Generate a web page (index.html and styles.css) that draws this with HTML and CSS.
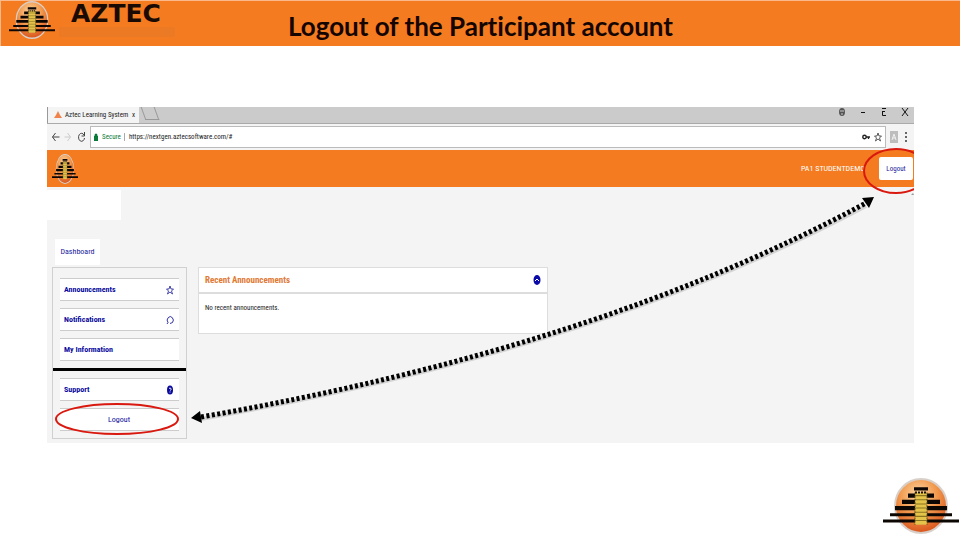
FILE: index.html
```html
<!DOCTYPE html>
<html lang="en">
<head>
    <meta charset="UTF-8">
    <meta name="viewport" content="width=device-width, initial-scale=1.0">
    <title>Logout of the Participant account</title>
    <link rel="stylesheet" href="styles.css">
</head>
<body>
    <!-- Pyramid logo, shared by the three places that use it -->
    <svg class="defs" aria-hidden="true">
        <defs>
            <radialGradient id="sun" cx="45%" cy="30%" r="70%">
                <stop offset="0" stop-color="#fbd9a8"/>
                <stop offset="0.5" stop-color="#f29a4e"/>
                <stop offset="1" stop-color="#d9541c"/>
            </radialGradient>
            <symbol id="pyramid" viewBox="0 0 76 54" preserveAspectRatio="none">
                <ellipse cx="38" cy="27" rx="26" ry="26" fill="url(#sun)" stroke="#d8cfc8" stroke-width="2"/>
                <path d="M31 9h14v3H31zM25 15h26v4H25zM19 21h38v4H19zM12 27h52v4H12zM7 34h62v3H7zM0 40h76v3H0z" fill="#0c0703"/>
                <path d="M32 14h12v31H32z" fill="#e3c34a"/>
                <path d="M32 17h12M32 21h12M32 25h12M32 29h12M32 33h12M32 37h12M32 41h12" stroke="#8a7420" stroke-width="1"/>
                <path d="M32 14v31M44 14v31" stroke="#5c4b12" stroke-width="1" stroke-dasharray="2 1"/>
                <path d="M32 14h12" stroke="#1a1204" stroke-width="2" stroke-dasharray="2 1"/>
            </symbol>
        </defs>
    </svg>

    <header class="slide-header">
        <div class="brand">
            <svg class="brand-logo"><use href="#pyramid"/></svg>
            <div class="brand-text">
                <span class="brand-name">AZTEC</span>
                <div class="brand-strip"></div>
            </div>
        </div>
        <h1>Logout of the Participant account</h1>
    </header>

    <main class="window">
        <div class="tab-strip">
            <div class="tab">
                <svg class="tab-icon" viewBox="0 0 8 8"><path d="M4 0l1 2 1 2 2 3H0l2-3 1-2z" fill="#f0824a"/></svg>
                <span>Aztec Learning System</span>
                <span class="tab-close">x</span>
            </div>
            <div class="new-tab"></div>
            <div class="window-buttons">
                <svg viewBox="0 0 10 10"><ellipse cx="5" cy="5" rx="3" ry="4" fill="#555"/><path d="M3 4h4M4 7h2" stroke="#ccc"/></svg>
                <svg viewBox="0 0 10 10"><path d="M3 5.500h4" stroke="#111"/></svg>
                <svg viewBox="0 0 10 10"><path d="M3 1.500h4M3.500 4v4.500H7M3 4.500h3" fill="none" stroke="#111"/></svg>
                <svg viewBox="0 0 10 10"><path d="M2 1l6 8M8 1L2 9" stroke="#111"/></svg>
            </div>
        </div>

        <div class="toolbar">
            <svg class="nav-icon" viewBox="0 0 8 10"><path d="M8 5H1M4 1L1 5l3 4" fill="none" stroke="#444"/></svg>
            <svg class="nav-icon" viewBox="0 0 8 10"><path d="M0 5h6M3 1l3 4-3 4" fill="none" stroke="#ccc"/></svg>
            <svg class="nav-icon" viewBox="0 0 8 10"><path d="M6.500 3A3 4 0 1 0 7 6M7 0v4H4" fill="none" stroke="#444"/></svg>
            <div class="address">
                <svg class="lock" viewBox="0 0 4 8"><path d="M0 3h4v5H0zM1 3V1h2v2" fill="#0b7a3b" stroke="#0b7a3b" stroke-width="0.500"/></svg>
                <span class="secure">Secure</span>
                <span class="url">https://nextgen.aztecsoftware.com/#</span>
                <svg class="key" viewBox="0 0 8 8"><circle cx="2.500" cy="4" r="1.700" fill="none" stroke="#222" stroke-width="1.400"/><path d="M4 4h4M6.500 4v2" stroke="#222" stroke-width="1.300"/></svg>
                <svg class="star" viewBox="0 0 8 10"><path d="M4 1l1 3h2.500L5.500 6l1 3L4 7 1.500 9l1-3L.5 4H3z" fill="none" stroke="#333" stroke-width="0.800"/></svg>
            </div>
            <svg class="extension" viewBox="0 0 8 12"><path d="M0 0h8v12H0z" fill="#bdbdbd"/><path d="M2 9l2-6 2 6M2 7h4" fill="none" stroke="#eee"/></svg>
            <svg class="dots" viewBox="0 0 4 12"><path d="M1 1h2v2H1zM1 5h2v2H1zM1 9h2v2H1z" fill="#666"/></svg>
        </div>

        <div class="app-bar">
            <svg class="app-logo"><use href="#pyramid"/></svg>
            <span class="user">PA1 STUDENTDEMO</span>
            <button class="logout-top">Logout</button>
        </div>

        <div class="app">
            <div class="blank"></div>
            <a class="crumb" href="#">Dashboard</a>
            <div class="columns">
                <nav class="sidebar">
                    <a class="item" href="#">Announcements
                        <svg viewBox="0 0 8 10"><path d="M4 1l1 3h2.500L5.500 6l1 3L4 7 1.500 9l1-3L.5 4H3z" fill="none" stroke="#1a1a9c" stroke-width="0.800"/></svg>
                    </a>
                    <a class="item" href="#">Notifications
                        <svg viewBox="0 0 8 10"><path d="M1 9l1-1.500A3 3.500 0 1 1 6.500 7.500L4 8.500" fill="none" stroke="#1a1a9c" stroke-width="0.900"/></svg>
                    </a>
                    <a class="item" href="#">My Information</a>
                    <hr>
                    <a class="item" href="#">Support
                        <svg viewBox="0 0 8 10"><ellipse cx="4" cy="5" rx="3" ry="4.500" fill="#0a0a9c"/><path d="M3 3.500q1-1 2 0T4 5.500M4 6.500v1" fill="none" stroke="#fff" stroke-width="0.900"/></svg>
                    </a>
                    <button class="item logout-side">Logout</button>
                </nav>
                <section class="panel">
                    <div class="panel-head">
                        <h2>Recent Announcements</h2>
                        <svg viewBox="0 0 8 10"><ellipse cx="4" cy="5" rx="3.500" ry="5" fill="#0a0aa8"/><path d="M2 6l2-2 2 2" fill="none" stroke="#fff"/></svg>
                    </div>
                    <p>No recent announcements.</p>
                </section>
            </div>
        </div>

        <!-- Red rings and the dotted arrow that joins both logout buttons -->
        <svg class="marks" viewBox="0 0 867 336" preserveAspectRatio="none" aria-hidden="true">
            <g fill="none" stroke="#d9190f" stroke-width="2">
                <ellipse cx="849" cy="64" rx="32" ry="22"/>
                <ellipse cx="70" cy="312" rx="61" ry="15"/>
            </g>
            <path d="M154 312Q550 243 819 99" fill="none" stroke="#d4d4d4" stroke-width="4"/>
            <path d="M154 310Q550 241 819 96" fill="none" stroke="#000" stroke-width="5" stroke-dasharray="3 2.400"/>
            <path d="M144 311l9-7 2 12zM827 90l-5 11-7-10z"/>
            <path d="M864 88l2-2 1 2z" fill="#999"/>
        </svg>
    </main>

    <footer>
        <svg class="footer-logo"><use href="#pyramid"/></svg>
    </footer>
</body>
</html>
```
FILE: styles.css
```css
* {
    box-sizing: border-box;
}

body {
    margin: 0;
    min-height: 100vh;
    display: flex;
    flex-direction: column;
    background-color: #fff;
    font-family: "Liberation Sans Narrow", "Arial Narrow", "Roboto Condensed", Roboto, sans-serif;
    font-size: 8px;
    color: #222;
}

svg {
    display: block;
    flex: none;
}

.defs {
    position: absolute;
    width: 0;
    height: 0;
}

a {
    color: #1a1a9c;
    text-decoration: none;
}

button {
    font-family: inherit;
    cursor: pointer;
}

/* Slide header */
.slide-header {
    display: grid;
    grid-template-columns: 1fr auto 1fr;
    align-items: center;
    height: 46px;
    background-color: #f47b20;
    border-top: 1px solid #f9b98a;
    border-left: 1px solid #f9b98a;
}

.brand {
    display: flex;
    align-self: start;
    gap: 4px;
    padding-left: 8px;
}

.brand-logo {
    width: 46px;
    height: 38px;
}

.brand-name {
    display: block;
    padding-left: 12px;
    font-family: "DejaVu Sans", sans-serif;
    font-size: 25px;
    font-weight: bold;
    line-height: 26px;
    color: #1a0a04;
}

.brand-strip {
    width: 116px;
    height: 10px;
    background-color: #ec7a24;
}

h1 {
    margin: 0;
    padding-top: 4px;
    font-family: Lato, sans-serif;
    font-size: 26px;
    line-height: 32px;
    font-variant-ligatures: none;
    color: #150500;
}

/* Browser window */
.window {
    position: relative;
    margin: 61px 46px 0 47px;
    background-color: #f4f4f4;
    overflow: hidden;
}

.tab-strip {
    display: flex;
    height: 16px;
    background-color: #cbcbcb;
}

.tab {
    display: flex;
    align-items: center;
    gap: 3px;
    width: 92px;
    padding: 0 4px 0 6px;
    background-color: #f4f4f4;
    border-left: 1px solid #999;
    font-size: 7px;
    line-height: 12px;
    white-space: nowrap;
}

.tab-icon {
    width: 8px;
    height: 8px;
}

.tab-close {
    margin-left: auto;
}

.new-tab {
    width: 14px;
    height: 13px;
    margin-left: 4px;
    border: 1px solid #999;
    border-top: none;
    transform: skewX(20deg);
}

.window-buttons {
    display: flex;
    gap: 11px;
    margin-left: auto;
    padding-right: 4px;
}

.window-buttons svg {
    width: 10px;
    height: 10px;
}

.toolbar {
    display: flex;
    align-items: center;
    gap: 4px;
    height: 27px;
    padding: 0 4px;
    border-top: 1px solid #aaa;
}

.nav-icon {
    width: 9px;
    height: 10px;
}

.address {
    flex: 1;
    display: flex;
    align-items: center;
    gap: 4px;
    height: 22px;
    padding: 0 3px;
    background-color: #fff;
    border: 1px solid #bbb;
    font-size: 7px;
}

.lock {
    width: 4px;
    height: 8px;
}

.secure {
    padding-right: 3px;
    border-right: 1px solid #aaa;
    color: #0b7a3b;
}

.key {
    width: 8px;
    height: 8px;
    margin-left: auto;
}

.star {
    width: 8px;
    height: 10px;
}

.extension {
    width: 8px;
    height: 12px;
}

.dots {
    width: 8px;
    height: 12px;
}

/* Application */
.app-bar {
    display: flex;
    align-items: center;
    height: 37px;
    padding: 0 1px 0 5px;
    background-color: #f47b20;
}

.app-logo {
    width: 26px;
    height: 30px;
}

.user {
    margin-left: auto;
    padding-right: 14px;
    color: #fff;
}

.logout-top {
    width: 34px;
    height: 23px;
    padding: 0;
    border: none;
    border-radius: 2px;
    background-color: #fff;
    font-size: 7px;
    color: #1a1a9c;
}

.app {
    padding: 3px 5px 4px;
}

.blank {
    width: 74px;
    height: 30px;
    margin-left: -5px;
    background-color: #fff;
}

.crumb {
    display: block;
    width: 45px;
    margin: 19px 0 2px 3px;
    background-color: #fff;
    line-height: 26px;
    text-align: center;
}

.columns {
    display: flex;
    align-items: flex-start;
    gap: 11px;
}

.sidebar {
    display: flex;
    flex-direction: column;
    gap: 7px;
    width: 135px;
    padding: 10px 7px 7px;
    border: 1px solid #d0d0d0;
}

.item {
    display: flex;
    align-items: center;
    justify-content: space-between;
    height: 23px;
    padding: 0 5px 0 4px;
    background-color: #fff;
    border: 0 solid #ccc;
    border-width: 1px 0;
    font-size: 8px;
    font-weight: bold;
    color: #0a0a9c;
}

.item svg {
    width: 8px;
    height: 10px;
}

.sidebar hr {
    width: 133px;
    height: 3px;
    margin: 0 -7px;
    border: none;
    background-color: #000;
}

.logout-side {
    justify-content: center;
    font-weight: normal;
}

.panel {
    width: 350px;
    min-height: 67px;
    background-color: #fff;
    border: 1px solid #ddd;
}

.panel-head {
    display: flex;
    align-items: center;
    justify-content: space-between;
    height: 26px;
    padding: 0 6px;
    border-bottom: 2px solid #ddd;
}

.panel-head svg {
    width: 8px;
    height: 10px;
}

h2 {
    margin: 0;
    font-size: 9px;
    color: #e07a35;
}

.panel p {
    margin: 0;
    padding: 8px 6px;
    font-size: 7px;
    line-height: 12px;
}

.marks {
    position: absolute;
    inset: 0;
    width: 100%;
    height: 100%;
    pointer-events: none;
}

/* Footer */
footer {
    display: flex;
    justify-content: flex-end;
    margin-top: auto;
    padding: 0 1px 6px;
}

.footer-logo {
    width: 76px;
    height: 56px;
}
```
